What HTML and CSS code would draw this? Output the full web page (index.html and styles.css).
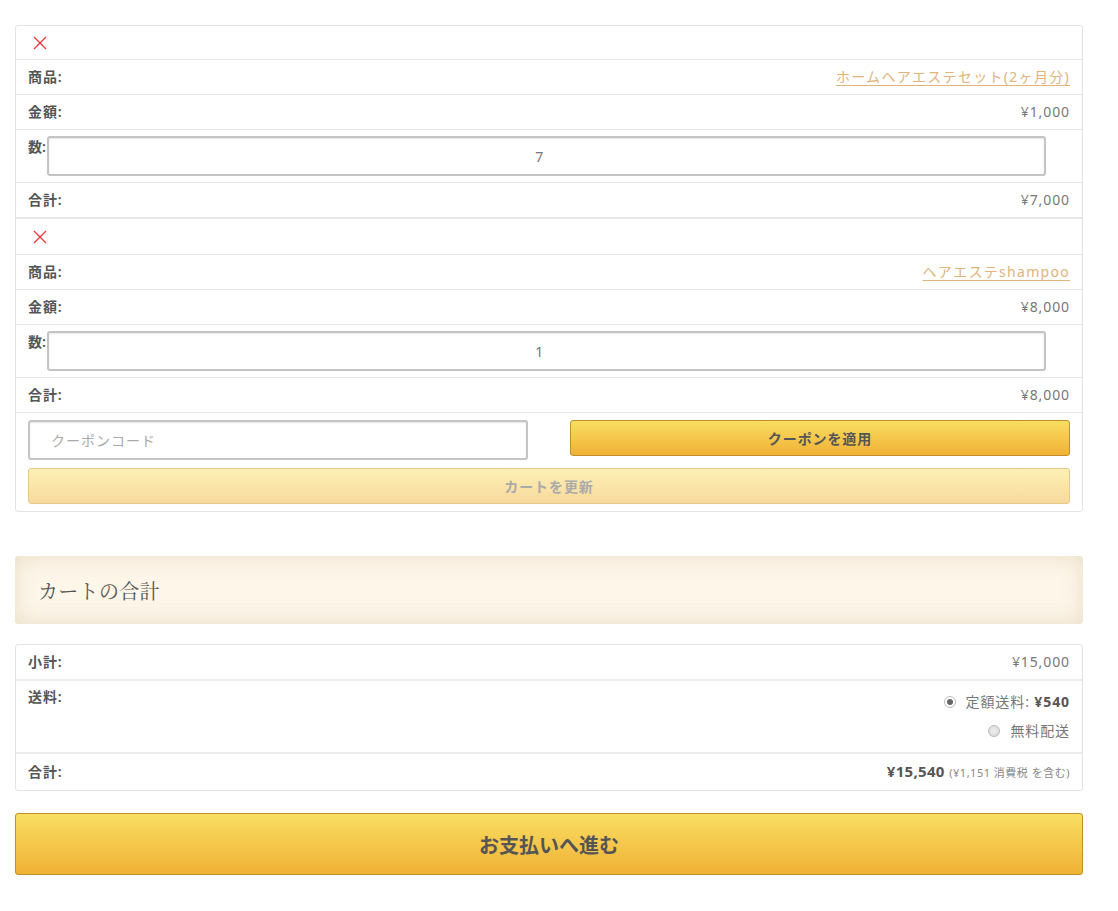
FILE: index.html
```html
<!DOCTYPE html>
<html lang="ja">
<head>
<meta charset="utf-8">
<link rel="stylesheet" href="styles.css">
</head>
<body>
<div class="page">
  <div class="cart">
    <div class="item">
      <div class="row remove-row">
        <svg class="remove" width="14" height="14" viewBox="0 0 14 14"><path d="M1 1 L13 13 M13 1 L1 13" stroke="#f2383b" stroke-width="1.3" fill="none"/></svg>
      </div>
      <div class="row"><span class="label">商品:</span><a class="link" href="#">ホームヘアエステセット(2ヶ月分)</a></div>
      <div class="row"><span class="label">金額:</span><span class="val">¥1,000</span></div>
      <div class="row qty-row"><span class="label">数:</span><input class="qty" type="text" value="7"></div>
      <div class="row"><span class="label">合計:</span><span class="val">¥7,000</span></div>
    </div>
    <div class="item second">
      <div class="row remove-row">
        <svg class="remove" width="14" height="14" viewBox="0 0 14 14"><path d="M1 1 L13 13 M13 1 L1 13" stroke="#f2383b" stroke-width="1.3" fill="none"/></svg>
      </div>
      <div class="row"><span class="label">商品:</span><a class="link" href="#">ヘアエステshampoo</a></div>
      <div class="row"><span class="label">金額:</span><span class="val">¥8,000</span></div>
      <div class="row qty-row"><span class="label">数:</span><input class="qty" type="text" value="1"></div>
      <div class="row"><span class="label">合計:</span><span class="val">¥8,000</span></div>
    </div>
    <div class="actions">
      <div class="coupon">
        <input class="coupon-input" type="text" placeholder="クーポンコード">
        <button class="btn apply">クーポンを適用</button>
      </div>
      <button class="btn update" disabled>カートを更新</button>
    </div>
  </div>

  <h2 class="totals-title">カートの合計</h2>

  <div class="totals">
    <div class="trow"><span class="label">小計:</span><span class="val">¥15,000</span></div>
    <div class="trow ship"><span class="label">送料:</span>
      <ul class="ship-list">
        <li><span class="radio checked"></span><span>定額送料: <b>¥540</b></span></li>
        <li><span class="radio"></span><span>無料配送</span></li>
      </ul>
    </div>
    <div class="trow last"><span class="label">合計:</span><span class="val"><b class="grand">¥15,540</b> <small class="tax">(¥1,151 消費税 を含む)</small></span></div>
  </div>

  <button class="btn checkout">お支払いへ進む</button>
</div>
</body>
</html>
```

FILE: styles.css
```css
* { box-sizing: border-box; }
body {
  margin: 0;
  background: #fff;
  font-family: "Noto Sans", "Noto Sans CJK JP", sans-serif;
  font-size: 14px;
  letter-spacing: 0.9px;
  color: #555;
}
.page {
  width: 1068px;
  margin: 25px 0 0 15px;
}
.cart {
  border: 1px solid #e3e3e3;
  border-radius: 3px;
}
.row {
  display: flex;
  justify-content: space-between;
  align-items: center;
  height: 35px;
  padding: 0 12px;
  border-bottom: 1px solid #e6e6e6;
  line-height: 20px;
}
.second { border-top: 1px solid #e6e6e6; }
.second .remove-row { height: 36px; }
.remove-row { justify-content: flex-start; height: 34px; }
.remove { margin-left: 5px; margin-top: 1px; }
.label { font-weight: 600; color: #555; }
.val { color: #777; }
.link { color: #e2b37a; text-decoration: underline; text-underline-offset: 3px; letter-spacing: 1.3px; }
.qty-row {
  height: 53px;
  align-items: flex-start;
  justify-content: flex-start;
  padding-top: 6px;
}
.qty-row .label { margin-top: 1px; letter-spacing: 0; }
.qty {
  width: 999px;
  height: 40px;
  margin-left: 1px;
  padding: 0 14px 0 0;
  border: 2px solid #c4c4c4;
  border-radius: 3px;
  box-shadow: inset 0 1px 2px rgba(0,0,0,0.1);
  text-align: center;
  font-family: inherit;
  font-size: 14px;
  color: #777;
  background: #fff;
}
.actions { padding: 7px 12px 7px; }
.coupon {
  display: grid;
  grid-template-columns: 500px 500px;
  column-gap: 42px;
  align-items: start;
  margin-bottom: 8px;
}
.coupon-input {
  height: 40px;
  border: 2px solid #c4c4c4;
  border-radius: 3px;
  box-shadow: inset 0 1px 2px rgba(0,0,0,0.1);
  padding-left: 21px;
  font-family: inherit;
  font-size: 14px;
  letter-spacing: 1px;
  color: #777;
}
.coupon-input::placeholder { color: #aaa; }
.btn {
  display: block;
  font-family: inherit;
  font-weight: 600;
  letter-spacing: 0.9px;
  color: #555;
  border-radius: 3px;
  cursor: pointer;
}
.apply {
  height: 36px;
  font-size: 14px;
  background: linear-gradient(#f9de62, #f0b135);
  border: 1px solid #bf8f28;
}
.update {
  width: 100%;
  height: 36px;
  font-size: 14px;
  color: #aaa;
  background: linear-gradient(#fdf0b4, #f8d99d);
  border: 1px solid #e3c98c;
}
.totals-title {
  margin: 44px 0 20px;
  height: 68px;
  padding: 0 23px;
  display: flex;
  align-items: center;
  font-family: "Noto Serif CJK JP", "Noto Serif JP", "IPAMincho", "Liberation Serif", serif;
  font-size: 20px;
  font-weight: normal;
  letter-spacing: 0.3px;
  color: #555;
  background: #fdf6e9;
  border-radius: 3px;
  box-shadow: inset 0 0 22px rgba(210,190,160,0.45);
}
.totals {
  border: 1px solid #e3e3e3;
  border-radius: 3px;
}
.trow {
  display: flex;
  justify-content: space-between;
  align-items: center;
  height: 36px;
  padding: 0 12px;
  border-bottom: 2px solid #ececec;
  line-height: 20px;
}
.trow.last { border-bottom: none; height: 36px; }
.trow.ship {
  height: 73px;
  align-items: flex-start;
  padding-top: 6px;
}
.ship-list {
  list-style: none;
  margin: 0;
  padding: 0;
  text-align: right;
  color: #777;
}
.ship-list li {
  display: flex;
  justify-content: flex-end;
  align-items: center;
  height: 29px;
}
.ship-list b { color: #555; }
.radio {
  display: inline-block;
  width: 12px;
  height: 12px;
  border-radius: 50%;
  border: 1px solid #bbb;
  background: radial-gradient(circle, #eee 0, #d6d6d6 100%);
  margin-right: 10px;
  position: relative;
}
.radio.checked { background: #fff; }
.radio.checked::after {
  content: "";
  position: absolute;
  left: 2px; top: 2px;
  width: 6px; height: 6px;
  border-radius: 50%;
  background: #666;
}
.grand { color: #555; font-size: 15px; letter-spacing: 0.3px; }
.tax { font-size: 11px; color: #888; letter-spacing: 0.5px; }
.checkout {
  margin-top: 22px;
  width: 100%;
  height: 62px;
  font-size: 20px;
  letter-spacing: 0;
  background: linear-gradient(#f9de62, #f0b135);
  border: 1px solid #bf8f28;
}
```
